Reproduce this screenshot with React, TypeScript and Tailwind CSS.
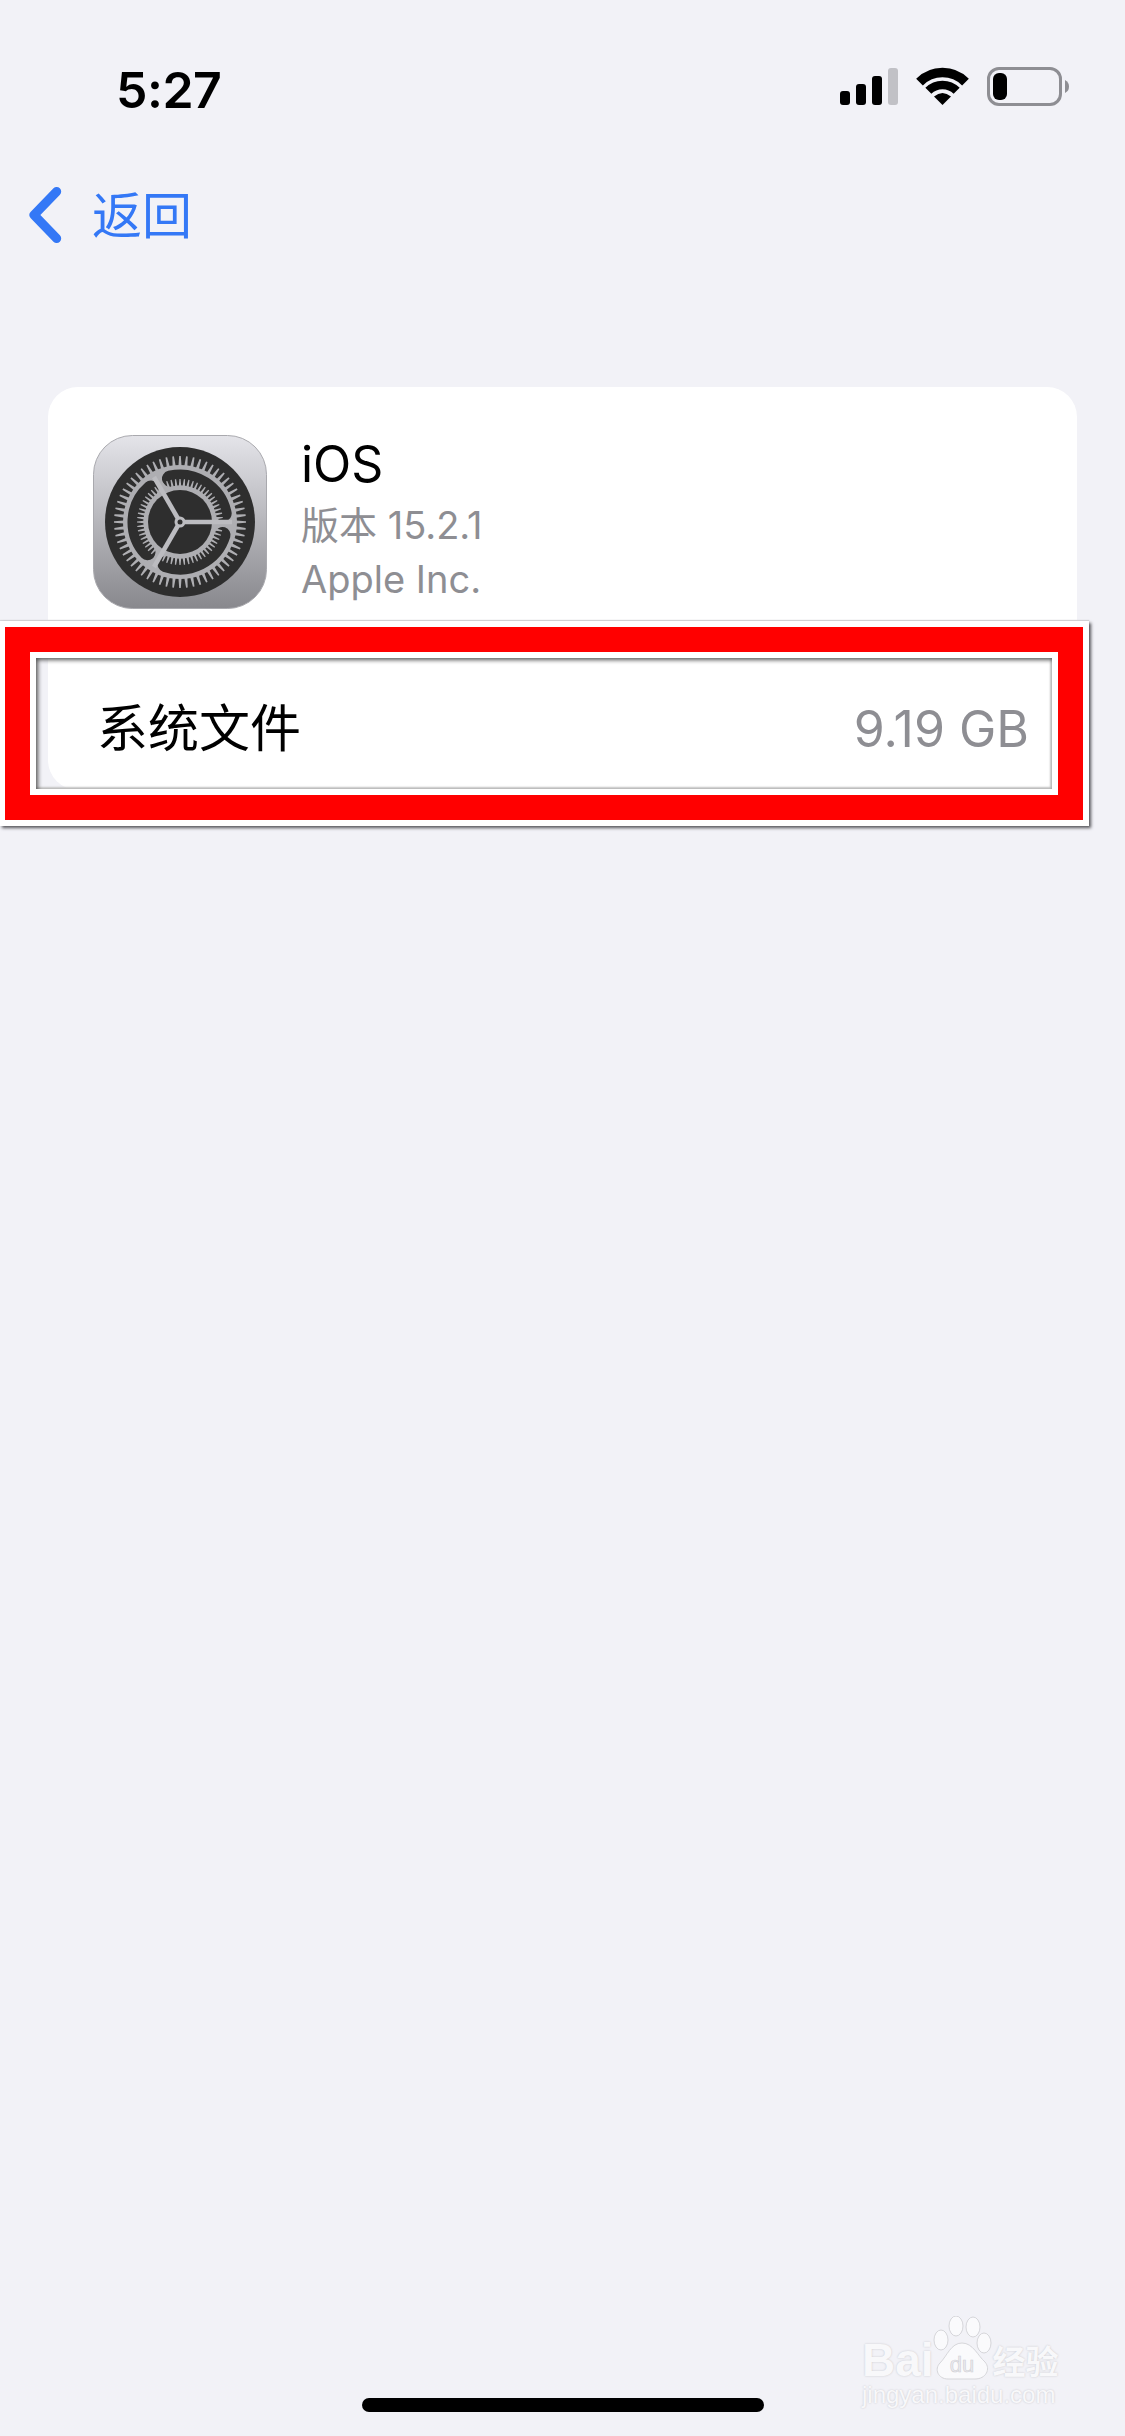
const FONT = "font-['Inter','Noto_Sans_CJK_SC',sans-serif]";

function polar(cx: number, cy: number, r: number, deg: number) {
  const a = (deg * Math.PI) / 180;
  return [cx + r * Math.cos(a), cy + r * Math.sin(a)];
}

function arc(cx: number, cy: number, r: number, from: number, to: number) {
  const [x1, y1] = polar(cx, cy, r, from);
  const [x2, y2] = polar(cx, cy, r, to);
  const large = to - from > 180 ? 1 : 0;
  return `M${x1} ${y1}A${r} ${r} 0 ${large} 1 ${x2} ${y2}`;
}

// tapered gear tooth, wide at the base and narrow at the tip
function tooth(deg: number, base: number, tip: number, baseW: number, tipW: number) {
  const [a, b] = polar(87, 87, base, deg - baseW);
  const [c, d] = polar(87, 87, tip, deg - tipW);
  const [e, f] = polar(87, 87, tip, deg + tipW);
  const [g, h] = polar(87, 87, base, deg + baseW);
  return `M${a} ${b}L${c} ${d}L${e} ${f}L${g} ${h}Z`;
}

const OUTER_TEETH = Array.from({ length: 60 }, (_, i) => tooth(i * 6, 56, 66, 1.6, 0.7)).join("");
const INNER_TEETH = Array.from({ length: 60 }, (_, i) => tooth(i * 6, 36, 43, 1.9, 0.8)).join("");

function SettingsIcon() {
  return (
    <svg viewBox="0 0 174 174" className="h-[174px] w-[174px] shrink-0">
      <defs>
        <linearGradient id="iconBg" x1="0" y1="0" x2="0" y2="1">
          <stop offset="0" stopColor="#e4e4e9" />
          <stop offset="1" stopColor="#88888d" />
        </linearGradient>
      </defs>
      <rect x="0.5" y="0.5" width="173" height="173" rx="39" fill="url(#iconBg)" stroke="#a9a9ae" />
      <circle cx="87" cy="87" r="75" fill="#2e2e2e" />
      <path d={OUTER_TEETH} fill="#aeaeb2" />
      <circle cx="87" cy="87" r="57" fill="#aeaeb2" />
      <g fill="none" stroke="#2e2e2e" strokeWidth="16" strokeLinecap="round">
        <path d={arc(87, 87, 44.5, -103, -11)} />
        <path d={arc(87, 87, 44.5, 17, 109)} />
        <path d={arc(87, 87, 44.5, 137, 229)} />
      </g>
      <path d={INNER_TEETH} fill="#aeaeb2" />
      <circle cx="87" cy="87" r="36.5" fill="#aeaeb2" />
      <circle cx="87" cy="87" r="32" fill="#2e2e2e" />
      <g stroke="#bcbcc0" strokeWidth="4.5">
        <line x1="87" y1="87" x2="139" y2="87" />
        <line x1="87" y1="87" x2="61" y2="132" />
        <line x1="87" y1="87" x2="61" y2="42" />
      </g>
      <circle cx="87" cy="87" r="5.5" fill="#bcbcc0" />
      <circle cx="87" cy="87" r="2.5" fill="#2e2e2e" />
    </svg>
  );
}

function StatusIcons() {
  return (
    <svg viewBox="840 66 232 44" className="h-[44px] w-[232px]">
      <rect x="840" y="93" width="10" height="14" rx="3" fill="#000" />
      <rect x="856" y="86" width="10" height="21" rx="3" fill="#000" />
      <rect x="872" y="78" width="10" height="29" rx="3" fill="#000" />
      <rect x="888" y="70" width="10" height="37" rx="3" fill="#c1c1c6" />
      <g fill="none" stroke="#000">
        <path d={arc(942.5, 107, 32.5, -135, -45)} strokeWidth="9.5" />
        <path d={arc(942.5, 107, 20, -135, -45)} strokeWidth="8.5" />
      </g>
      <path d="M942.5 107L934 98.500Q942.5 91.500 951 98.500Z" fill="#000" />
      <rect x="988.500" y="70.500" width="72" height="36" rx="10.500" fill="none" stroke="#8e8e93" strokeWidth="3" />
      <rect x="993" y="75" width="14" height="27" rx="6" fill="#000" />
      <path d="M1065 82Q1069 84 1069 88.500Q1069 93 1065 95Z" fill="#8e8e93" />
    </svg>
  );
}

function Watermark() {
  const shadow = "[text-shadow:0_0_2px_#c4c4c9]";
  return (
    <div className="absolute left-[862px] top-[2316px] w-[204px] text-[#f8f8fa]">
      <div className="flex items-end">
        <span className={`font-['Liberation_Sans',sans-serif] text-[46px] font-bold leading-[40px] ${shadow}`}>Bai</span>
        <svg viewBox="0 0 62 64" className="ml-[-3px] h-[64px] w-[62px] shrink-0">
          <g fill="#fafafc" stroke="#d6d6da">
            <ellipse cx="10" cy="24" rx="7" ry="10" />
            <ellipse cx="25" cy="10" rx="7" ry="10" />
            <ellipse cx="42" cy="11" rx="7" ry="10" />
            <ellipse cx="53" cy="27" rx="7" ry="10" />
            <path d="M31 27C42 27 47 40 54 46C60 53 55 63 44 63H17C7 63 3 53 9 47C16 40 20 27 31 27Z" />
          </g>
          <text x="31" y="56" textAnchor="middle" fontSize="22" fontFamily="Liberation Sans" fill="#ececf0" stroke="#cfcfd4" strokeWidth="0.6">du</text>
        </svg>
        <span className={`font-['Noto_Sans_CJK_SC',sans-serif] text-[33px] font-bold leading-[40px] ${shadow}`}>经验</span>
      </div>
      <div className={`mt-[1px] font-['Liberation_Sans',sans-serif] text-[24px] leading-[28px] ${shadow}`}>jingyan.baidu.com</div>
    </div>
  );
}

export default function App() {
  return (
    <div className={`relative flex h-[2436px] w-[1125px] flex-col overflow-hidden bg-[#f2f2f7] ${FONT}`}>
      <div className="flex h-[110px] items-end justify-between pl-[116px] pr-[53px]">
        <span className="mb-[-5px] text-[50px] font-semibold leading-[50px] tracking-[-0.5px] text-black">5:27</span>
        <span className="mb-[2px] flex">
          <StatusIcons />
        </span>
      </div>

      <div className="mt-[76px] flex items-center pl-[26px]">
        <svg viewBox="0 0 40 60" className="h-[60px] w-[40px]">
          <path d="M30.700 5.500L8 29L30.700 52.500" fill="none" stroke="#3478f6" strokeWidth="9" strokeLinecap="round" strokeLinejoin="round" />
        </svg>
        <span className="ml-[26px] text-[50px] leading-[60px] text-[#3478f6]">返回</span>
      </div>

      <div className="mx-[48px] mt-[141px] h-[403px] rounded-[30px] bg-white">
        <div className="flex h-[279px] items-start pl-[45px] pt-[48px]">
          <SettingsIcon />
          <div className="ml-[34px] flex flex-col">
            <span className="text-[50px] leading-[58px] text-black">iOS</span>
            <span className="mt-[5px] text-[38px] leading-[54px] text-[#8e8e93]">版本 15.2.1</span>
            <span className="text-[38px] leading-[54px] text-[#8e8e93]">Apple Inc.</span>
          </div>
        </div>
        <div className="flex h-[126px] items-center justify-between pl-[49px] pr-[48px]">
          <span className="text-[51px] leading-[60px] text-black">系统文件</span>
          <span className="text-[50px] leading-[60px] text-[#8e8e93]">9.19 GB</span>
        </div>
      </div>

      {/* red highlight drawn over the screenshot, centre stays see-through */}
      <div className="absolute left-0 top-[621px] h-[205px] w-[1089px] border-[6px] border-l-[5px] border-white shadow-[2px_2px_3px_#55555a,0_-1px_1px_#d8d8dc]">
        <div className="h-full w-full border-[25px] border-[#ff0000]">
          <div className="h-full w-full border-[6px] border-white">
            <div className="h-full w-full shadow-[inset_2px_2px_4px_#555,inset_-2px_-2px_2px_#ccc]" />
          </div>
        </div>
      </div>

      <div className="mt-auto mb-[24px] h-[14px] w-[402px] self-center rounded-full bg-black" />

      <Watermark />
    </div>
  );
}
